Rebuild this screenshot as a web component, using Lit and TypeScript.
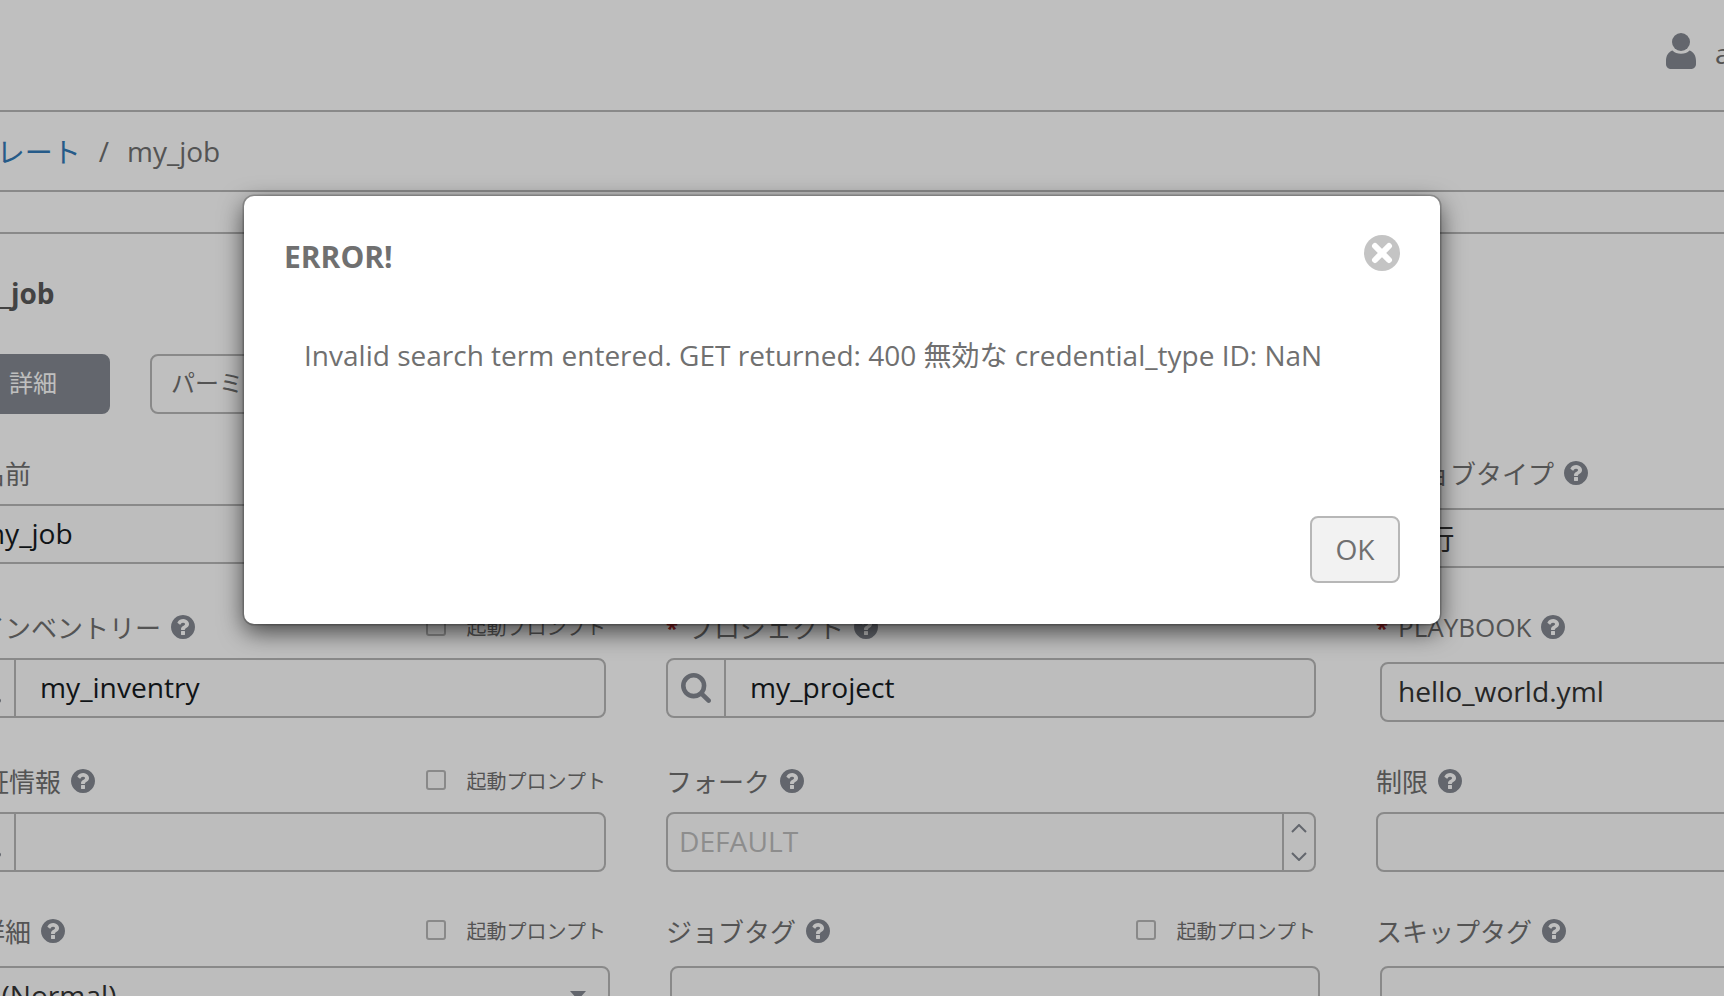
import { LitElement, html, css, svg, nothing } from 'lit';
import { customElement } from 'lit/decorators.js';

// font-awesome style glyphs, 1792 grid
const question = svg`<path d="M1024 1376v-192q0-14-9-23t-23-9h-192q-14 0-23 9t-9 23v192q0 14 9 23t23 9h192q14 0 23-9t9-23zm256-672q0-88-55.5-163t-138.5-116-170-41q-243 0-371 213-15 24 8 42l132 100q7 6 19 6 16 0 25-12 53-68 86-92 34-24 86-24 48 0 85.5 26t37.5 59q0 38-20 61t-68 45q-63 28-115.5 86.5t-52.5 125.5v36q0 14 9 23t23 9h192q14 0 23-9t9-23q0-19 21.5-49.5t54.5-49.5q32-18 49-28.5t46-35 44.5-48 28-60.5 12.5-81zm384 192q0 209-103 385.5t-279.5 279.5-385.5 103-385.5-103-279.5-279.5-103-385.5 103-385.5 279.5-279.5 385.5-103 385.5 103 279.5 279.5 103 385.5z"/>`;
const search = svg`<path d="M1216 832q0-185-131.5-316.5t-316.5-131.5-316.5 131.5-131.5 316.5 131.5 316.5 316.5 131.5 316.5-131.5 131.5-316.5zm512 832q0 52-38 90t-90 38q-54 0-90-38l-343-342q-179 124-399 124-143 0-273.5-55.5t-225-150-150-225-55.5-273.5 55.5-273.5 150-225 225-150 273.5-55.5 273.5 55.5 225 150 150 225 55.5 273.5q0 220-124 399l343 343q37 37 37 90z"/>`;

type Field = {
  label: string;
  required?: boolean;
  help?: boolean;
  prompt?: boolean;
  kind: 'input' | 'lookup' | 'select' | 'number' | 'tags';
  value?: string;
  placeholder?: string;
  caret?: boolean;
};

const fields: Field[] = [
  { label: '名前', required: true, kind: 'input', value: 'my_job' },
  { label: '説明', kind: 'input' },
  { label: 'ジョブタイプ', required: true, help: true, kind: 'select', value: '実行' },
  { label: 'インベントリー', required: true, help: true, prompt: true, kind: 'lookup', value: 'my_inventry' },
  { label: 'プロジェクト', required: true, help: true, kind: 'lookup', value: 'my_project' },
  { label: 'PLAYBOOK', required: true, help: true, kind: 'select', value: 'hello_world.yml' },
  { label: '認証情報', help: true, prompt: true, kind: 'lookup' },
  { label: 'フォーク', help: true, kind: 'number', placeholder: 'DEFAULT' },
  { label: '制限', help: true, kind: 'input' },
  { label: '詳細', required: true, help: true, prompt: true, kind: 'select', value: '1 (Normal)', caret: true },
  { label: 'ジョブタグ', help: true, prompt: true, kind: 'tags' },
  { label: 'スキップタグ', help: true, kind: 'tags' },
];

@customElement('app-root')
export class AppRoot extends LitElement {
  static styles = css`
    :host {
      display: block;
      position: relative;
      width: 1724px;
      height: 996px;
      overflow: hidden;
      background: #fff;
      font-family: 'Open Sans', 'Noto Sans CJK JP', sans-serif;
      color: #707070;
    }
    .page {
      width: 2200px;
      margin-left: -90px;
    }
    .top {
      height: 110px;
      border-bottom: 2px solid #b7b7b7;
      display: flex;
      align-items: center;
      padding-left: 1756px;
      gap: 19px;
      font-size: 28px;
    }
    .user-icon {
      width: 30px;
      height: 36px;
      fill: #848992;
      margin-top: -9px;
    }
    .top span {
      margin-top: -4px;
    }
    .crumbs {
      height: 78px;
      border-bottom: 2px solid #b7b7b7;
      display: flex;
      align-items: center;
      font-size: 28px;
      padding-left: 3.5px;
    }
    .crumbs a {
      color: #337ab7;
    }
    .crumbs .sep {
      margin: 0 18px;
    }
    .gap {
      height: 40px;
    }
    .card {
      border-top: 2px solid #b7b7b7;
      padding-left: 46px;
    }
    .title {
      margin-top: 39px;
      height: 40px;
      line-height: 40px;
      font-size: 28px;
      font-weight: 700;
      color: #5a5a5a;
    }
    .tabs {
      display: flex;
      gap: 40px;
      margin: 41px 0 28px;
    }
    .tab {
      box-sizing: border-box;
      height: 60px;
      width: 154px;
      display: flex;
      align-items: center;
      justify-content: center;
      border: 2px solid #b7b7b7;
      border-radius: 8px;
      font-size: 24px;
      padding-bottom: 6px;
    }
    .tab.active {
      background: #848992;
      border-color: #848992;
      color: #fff;
    }
    .tab.wide {
      width: auto;
      padding-left: 19px;
      padding-right: 19px;
    }
    .form {
      display: grid;
      grid-template-columns: repeat(3, 650px);
      grid-template-rows: 154px 154px 150px 150px;
      column-gap: 60px;
    }
    .head {
      height: 62px;
      display: flex;
      align-items: flex-start;
      justify-content: space-between;
    }
    .label {
      display: flex;
      align-items: center;
      height: 62px;
      font-size: 26px;
      white-space: nowrap;
      color: #707070;
    }
    .field:nth-child(3n + 1) .label {
      margin-left: 1px;
    }
    .star {
      width: 22px;
      color: #b02a2a;
      font-weight: 700;
      font-size: 22px;
    }
    .help {
      width: 24px;
      height: 24px;
      margin-left: 10px;
      fill: #848992;
      flex: none;
    }
    .prompt {
      display: flex;
      align-items: center;
      height: 60px;
      gap: 21px;
      font-size: 20px;
    }
    .check {
      box-sizing: border-box;
      width: 20px;
      height: 20px;
      border: 2px solid #b7b7b7;
      border-radius: 3px;
      background: #fcfcfc;
    }
    .control {
      box-sizing: border-box;
      height: 60px;
      border: 2px solid #b7b7b7;
      border-radius: 8px;
      background: #fcfcfc;
      display: flex;
      align-items: center;
      font-size: 28.16px;
      color: #161b1f;
      position: relative;
    }
    .control.sel {
      margin: 4px -4px 0 4px;
      padding-left: 16px;
      padding-bottom: 2px;
      color: #333;
    }
    .control.plain {
      padding-left: 21px;
      padding-bottom: 2px;
    }
    .control.number {
      padding-left: 11px;
    }
    .lens {
      box-sizing: border-box;
      width: 58px;
      height: 100%;
      border-right: 2px solid #b7b7b7;
      display: flex;
      align-items: center;
      justify-content: center;
      flex: none;
    }
    .lens svg {
      width: 30px;
      height: 30px;
      fill: #848992;
    }
    .lookup-value {
      padding-left: 24px;
      margin-top: -2px;
    }
    .placeholder {
      color: #bcbcbc;
      flex: 1;
      margin-top: -2px;
    }
    .spin {
      box-sizing: border-box;
      width: 32px;
      height: 100%;
      border-left: 2px solid #b7b7b7;
      display: flex;
      flex-direction: column;
      align-items: center;
      justify-content: center;
      gap: 19px;
    }
    .spin svg {
      width: 16px;
      height: 9px;
      fill: none;
      stroke: #848992;
      stroke-width: 2;
      display: block;
    }
    .caret {
      position: absolute;
      right: 22px;
      top: 23px;
      width: 0;
      height: 0;
      border-left: 8px solid transparent;
      border-right: 8px solid transparent;
      border-top: 9px solid #848992;
    }
    .backdrop {
      position: absolute;
      inset: 0;
      background: rgba(0, 0, 0, 0.25);
    }
    .modal {
      position: absolute;
      left: 244px;
      top: 196px;
      box-sizing: border-box;
      width: 1196px;
      height: 428px;
      background: #fff;
      border-radius: 10px;
      box-shadow: 0 0 0 1.5px rgba(0, 0, 0, 0.2), 0 8px 24px rgba(0, 0, 0, 0.65);
      padding: 0 40px 41px;
      display: flex;
      flex-direction: column;
    }
    .modal-head {
      display: flex;
      justify-content: space-between;
      align-items: flex-start;
      padding-top: 40px;
    }
    .modal-title {
      font-size: 30px;
      font-weight: 700;
      line-height: 42px;
      color: #707070;
    }
    .close {
      width: 36px;
      height: 36px;
      margin-top: -1px;
    }
    .modal-body {
      flex: 1;
      padding: 57px 20px 0;
      font-size: 28.03px;
      line-height: 40px;
      color: #707070;
      white-space: nowrap;
    }
    .modal-foot {
      display: flex;
      justify-content: flex-end;
    }
    .ok {
      box-sizing: border-box;
      width: 90px;
      height: 67px;
      border: 2px solid #b7b7b7;
      border-radius: 8px;
      background: #f2f2f2;
      color: #707070;
      font: inherit;
      font-size: 28.16px;
      padding: 0 0 2px;
    }
  `;

  private control(f: Field) {
    if (f.kind === 'lookup') {
      return html`<div class="control">
        <span class="lens"><svg viewBox="64 128 1664 1664">${search}</svg></span>
        <span class="lookup-value">${f.value ?? ''}</span>
      </div>`;
    }
    if (f.kind === 'number') {
      return html`<div class="control number">
        <span class="placeholder">${f.placeholder}</span>
        <span class="spin">
          <svg viewBox="0 0 16 9"><path d="M1 8l7-7 7 7" /></svg>
          <svg viewBox="0 0 16 9"><path d="M1 1l7 7 7-7" /></svg>
        </span>
      </div>`;
    }
    if (f.kind === 'select' || f.kind === 'tags') {
      return html`<div class="control sel">
        ${f.value ?? ''}${f.caret ? html`<span class="caret"></span>` : nothing}
      </div>`;
    }
    return html`<div class="control plain">${f.value ?? ''}</div>`;
  }

  private field(f: Field) {
    return html`<div class="field">
      <div class="head">
        <div class="label">
          ${f.required ? html`<span class="star">*</span>` : nothing}
          ${f.label}
          ${f.help ? html`<svg class="help" viewBox="128 128 1536 1536">${question}</svg>` : nothing}
        </div>
        ${f.prompt
          ? html`<div class="prompt"><span class="check"></span>起動プロンプト</div>`
          : nothing}
      </div>
      ${this.control(f)}
    </div>`;
  }

  render() {
    return html`
      <div class="page">
        <div class="top">
          <svg class="user-icon" viewBox="0 0 30 36">
            <circle cx="15" cy="9" r="9" />
            <path d="M6.5 17.5c2 2.2 5 3.3 8.5 3.3s6.5-1.1 8.5-3.3c4 1.3 6.5 5 6.5 10.5v3c0 2.8-2 5-5 5H5c-3 0-5-2.2-5-5v-3c0-5.5 2.5-9.2 6.5-10.5z" />
          </svg>
          <span>admin</span>
        </div>
        <div class="crumbs">
          <a>テンプレート</a><span class="sep">/</span><span>my_job</span>
        </div>
        <div class="gap"></div>
        <div class="card">
          <div class="title">my_job</div>
          <div class="tabs">
            <div class="tab active">詳細</div>
            <div class="tab wide">パーミッション</div>
          </div>
          <div class="form">${fields.map((f) => this.field(f))}</div>
        </div>
      </div>
      <div class="backdrop"></div>
      <div class="modal">
        <div class="modal-head">
          <div class="modal-title">ERROR!</div>
          <svg class="close" viewBox="0 0 36 36">
            <circle cx="18" cy="18" r="18" fill="#c4c4c4" />
            <path d="M11 11l14 14M25 11L11 25" stroke="#fff" stroke-width="6" stroke-linecap="round" />
          </svg>
        </div>
        <div class="modal-body">Invalid search term entered. GET returned: 400 無効な credential_type ID: NaN</div>
        <div class="modal-foot"><button class="ok">OK</button></div>
      </div>
    `;
  }
}
